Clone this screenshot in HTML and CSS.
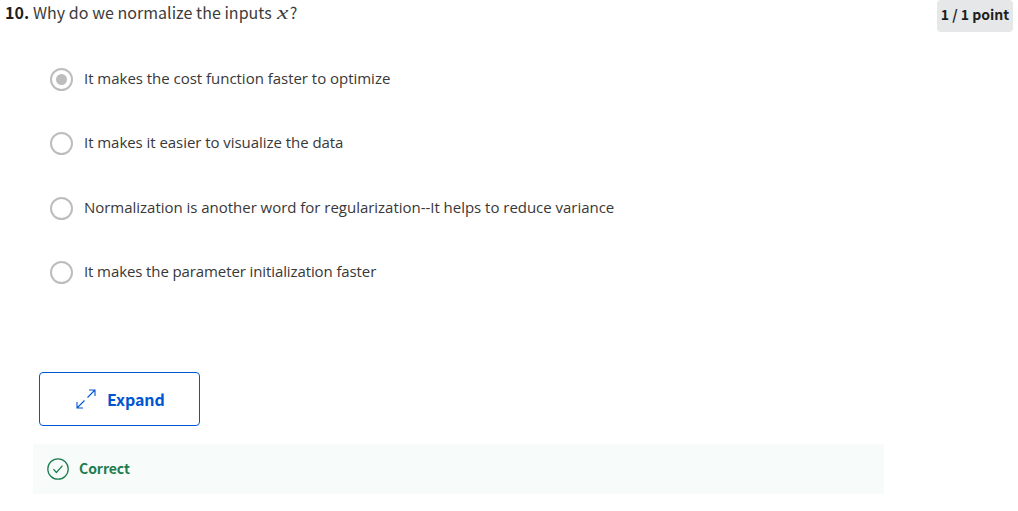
FILE: index.html
```html
<!DOCTYPE html>
<html lang="en">
<head>
<meta charset="utf-8">
<title>Quiz question</title>
<link rel="stylesheet" href="styles.css">
</head>
<body>
<main class="question">
  <header class="head">
    <h1 class="prompt"><span class="number">10.</span><span class="ask">Why do we normalize the inputs</span><span class="math">x</span><span class="ask">?</span></h1>
    <span class="points">1 / 1 point</span>
  </header>
  <div class="options">
    <div class="option"><span class="radio checked"></span><span class="label l1">It makes the cost function faster to optimize</span></div>
    <div class="option"><span class="radio"></span><span class="label l2">It makes it easier to visualize the data</span></div>
    <div class="option"><span class="radio"></span><span class="label l3">Normalization is another word for regularization--It helps to reduce variance</span></div>
    <div class="option"><span class="radio"></span><span class="label l4">It makes the parameter initialization faster</span></div>
  </div>
  <button class="expand" type="button">
    <svg class="arrows" width="20" height="20" viewBox="0 0 20 20" fill="none" stroke="currentColor" stroke-width="1.1"><path d="M11.5 8.5 19 1M13 1h6v6M8.5 11.5 1 19M1 13v6h6"/></svg>
    <span class="expand-text">Expand</span>
  </button>
  <div class="feedback">
    <svg class="check" width="22" height="22" viewBox="0 0 22 22" fill="none" stroke="currentColor" stroke-width="1.25"><circle cx="11" cy="11" r="10.2"/><path d="m6.4 11.2 3 3.3 6.1-6.9"/></svg>
    <span class="feedback-text">Correct</span>
  </div>
</main>
</body>
</html>
```
FILE: styles.css
```css
* { box-sizing: border-box; }
body { margin: 0; background: #fff; color: #1f1f1f; font-family: "Noto Sans CJK SC", sans-serif; }
.question { width: 1018px; height: 511px; overflow: hidden; }
.head { display: flex; justify-content: space-between; height: 47px; padding: 0 5px; }
.prompt { display: flex; margin: 0; height: 24px; font-size: 16px; font-weight: 400; line-height: 24px; white-space: nowrap; color: #3c3c3c; }
.number { width: 28px; font-weight: 700; color: #1f1f1f; }
.ask { letter-spacing: 0.035px; }
.math { width: 12px; margin: 0 1px 0 5px; font: italic 19px/25px "Liberation Serif", serif; transform: scaleX(1.35); transform-origin: left; }
.points { width: 76px; height: 32px; border-radius: 4px; background: #e5e7e8; font-size: 14px; font-weight: 700; line-height: 28px; text-align: center; white-space: nowrap; }
.options { display: grid; grid-template-rows: 64px 65px 64px 64px; height: 325px; padding-left: 50px; }
.option { display: flex; align-items: center; gap: 11px; height: 64px; }
.radio { display: flex; width: 23px; height: 23px; border: 2px solid #bdbdbd; border-radius: 50%; }
.checked::after { content: ""; width: 11px; height: 11px; margin: auto; border-radius: 50%; background: #bdbdbd; }
.label { padding-bottom: 2px; font: 400 15px/22px "Open Sans", sans-serif; letter-spacing: -0.025px; white-space: nowrap; color: #383838; }
.l2 { letter-spacing: -0.05px; }
.l4 { letter-spacing: -0.105px; }
.expand { display: flex; align-items: center; width: 161px; height: 54px; margin: 0 0 18px 39px; padding: 0 0 0 36px; border: 1px solid #0056d2; border-radius: 4px; background: #fff; color: #0056d2; font: 700 16px/24px "Noto Sans CJK SC", sans-serif; letter-spacing: -0.1px; gap: 11px; }
.feedback { display: flex; align-items: center; gap: 10px; width: 851px; height: 50px; margin-left: 33px; padding-left: 14px; background: #f7fbf9; color: #1d7c50; font-size: 14px; font-weight: 700; }
.feedback-text { padding-bottom: 2px; letter-spacing: -0.05px; }
```
